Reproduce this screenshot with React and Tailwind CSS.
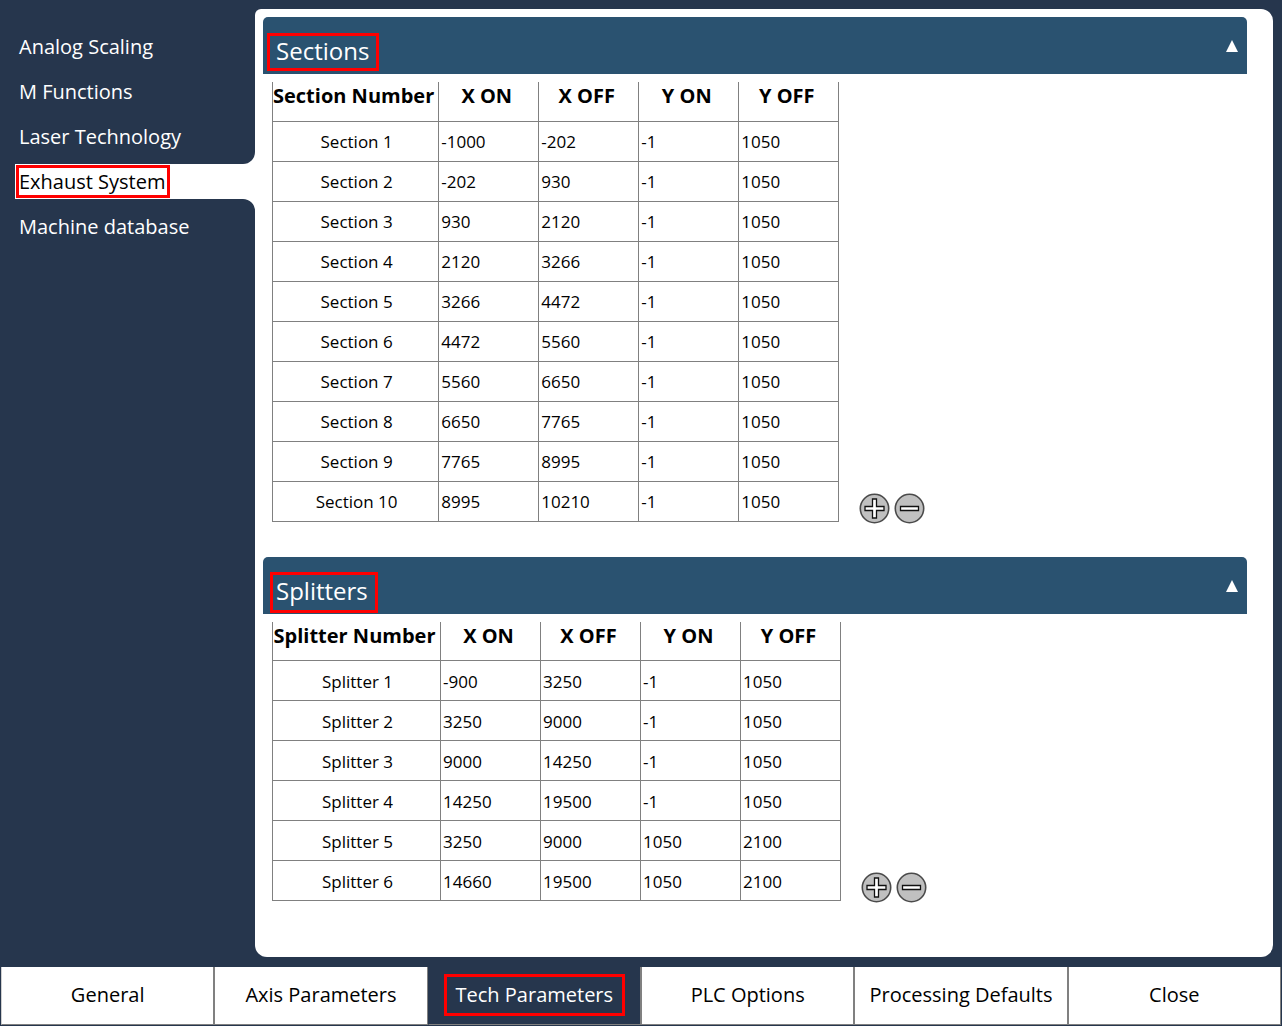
import React from "react";

const menuItems = ["Analog Scaling", "M Functions", "Laser Technology", "Exhaust System", "Machine database"];

const tabs = ["General", "Axis Parameters", "Tech Parameters", "PLC Options", "Processing Defaults", "Close"];

const sections = [
  ["Section 1", "-1000", "-202", "-1", "1050"],
  ["Section 2", "-202", "930", "-1", "1050"],
  ["Section 3", "930", "2120", "-1", "1050"],
  ["Section 4", "2120", "3266", "-1", "1050"],
  ["Section 5", "3266", "4472", "-1", "1050"],
  ["Section 6", "4472", "5560", "-1", "1050"],
  ["Section 7", "5560", "6650", "-1", "1050"],
  ["Section 8", "6650", "7765", "-1", "1050"],
  ["Section 9", "7765", "8995", "-1", "1050"],
  ["Section 10", "8995", "10210", "-1", "1050"],
];

const splitters = [
  ["Splitter 1", "-900", "3250", "-1", "1050"],
  ["Splitter 2", "3250", "9000", "-1", "1050"],
  ["Splitter 3", "9000", "14250", "-1", "1050"],
  ["Splitter 4", "14250", "19500", "-1", "1050"],
  ["Splitter 5", "3250", "9000", "1050", "2100"],
  ["Splitter 6", "14660", "19500", "1050", "2100"],
];

function RoundButton({ label, path }) {
  return (
    <button type="button" aria-label={label} className="size-[31px]">
      <svg viewBox="0 0 31 31" className="size-full">
        <circle cx="15.5" cy="15.5" r="14.2" fill="#c0c0c0" stroke="#4a4a4a" strokeWidth="1.6" />
        <path d={path} fill="#fff" stroke="#111" strokeWidth="1.3" />
      </svg>
    </button>
  );
}

function SidebarItem({ label, active }) {
  if (!active) {
    return (
      <a href="#" className="flex h-[35px] items-center pl-1 text-white">
        {label}
      </a>
    );
  }
  return (
    <a
      href="#"
      aria-current="page"
      className="relative flex h-[35px] items-center bg-white pl-px text-black before:absolute before:right-0 before:bottom-full before:size-3 before:rounded-br-xl before:shadow-[4px_4px_0_4px_white] before:content-[''] before:[clip-path:inset(0)] after:absolute after:top-full after:right-0 after:size-3 after:rounded-tr-xl after:shadow-[4px_-4px_0_4px_white] after:content-[''] after:[clip-path:inset(0)]"
    >
      <span className="flex h-[33px] items-center border-3 border-[#ff0000] pr-0.5">{label}</span>
    </a>
  );
}

function Group({ title, titleClass, firstColumn, firstWidth, rows }) {
  return (
    <section>
      <h2>
        <button
          type="button"
          aria-expanded="true"
          className="flex h-[57px] w-full items-start justify-between rounded-t-[5px] bg-[#2a5270] pr-[9px] text-left text-2xl text-white"
        >
          <span className={titleClass}>{title}</span>
          <svg viewBox="0 0 12 12" className="mt-[23px] size-3" fill="#fff">
            <path d="M6 0L12 12H0Z" />
          </svg>
        </button>
      </h2>
      <div className="mt-2 ml-[9px] flex items-end gap-5">
        <table className="table-fixed border-collapse text-[17px]">
          <colgroup>
            <col className={firstWidth} />
            <col className="w-[100px]" />
            <col className="w-[100px]" />
            <col className="w-[100px]" />
            <col className="w-[100px]" />
          </colgroup>
          <thead>
            <tr className="h-[39px] align-top text-xl font-bold whitespace-nowrap">
              {[firstColumn, "X ON", "X OFF", "Y ON", "Y OFF"].map((name) => (
                <th key={name} scope="col" className="border-x border-b border-[#808080] py-0 pr-1 pl-0">
                  {name}
                </th>
              ))}
            </tr>
          </thead>
          <tbody>
            {rows.map(([name, ...values]) => (
              <tr key={name} className="h-10">
                <th scope="row" className="border border-[#808080] pt-0.5 pr-0 pb-0 pl-0.5 text-center font-normal">
                  {name}
                </th>
                {values.map((value, i) => (
                  <td key={i} className="border border-[#808080] pt-0.5 pr-0 pb-0 pl-0.5">
                    {value}
                  </td>
                ))}
              </tr>
            ))}
          </tbody>
        </table>
        <div className="-mb-0.5 flex gap-1">
          <RoundButton label={`Add to ${title}`} path="M13.5 6H17.5V13.5H25V17.5H17.5V25H13.5V17.5H6V13.5H13.5Z" />
          <RoundButton label={`Remove from ${title}`} path="M6.5 13.5H24.5V17.5H6.5Z" />
        </div>
      </div>
    </section>
  );
}

export default function App() {
  return (
    <div className="flex min-h-screen flex-col bg-[#26364d] font-['Open_Sans','Noto_Sans',sans-serif] text-black">
      <div className="flex flex-1 pt-[9px] pr-[9px] pb-[10px]">
        <nav aria-label="Parameter groups" className="flex w-[255px] shrink-0 flex-col gap-2.5 pt-5 pl-[15px] text-xl">
          {menuItems.map((item) => (
            <SidebarItem key={item} label={item} active={item === "Exhaust System"} />
          ))}
        </nav>
        <main className="flex min-w-0 flex-1 flex-col gap-[35px] rounded-xl rounded-tl-md bg-white pt-2 pr-[26px] pb-8 pl-2">
          <Group
            title="Sections"
            titleClass="mt-4 ml-1 flex h-[38px] items-center border-3 border-[#ff0000] pr-[7px] pb-0.5 pl-1.5"
            firstColumn="Section Number"
            firstWidth="w-[166px]"
            rows={sections}
          />
          <Group
            title="Splitters"
            titleClass="mt-[15px] ml-[7px] flex h-[41px] items-center border-3 border-[#ff0000] pr-[7px] pb-0.5 pl-[3px]"
            firstColumn="Splitter Number"
            firstWidth="w-[168px]"
            rows={splitters}
          />
        </main>
      </div>
      <div role="tablist" className="mb-px grid h-[58px] grid-cols-6 px-px text-xl">
        {tabs.map((tab) => {
          const active = tab === "Tech Parameters";
          return (
            <button
              key={tab}
              type="button"
              role="tab"
              aria-selected={active}
              className={
                active
                  ? "flex items-center justify-center border-x border-b border-[#808080] border-l-[#26364d] pb-0.5 text-white"
                  : "flex items-center justify-center border-x border-b border-[#808080] bg-white pb-0.5 first:border-l-[#d0d0d0]"
              }
            >
              {active ? (
                <span className="flex h-[42px] items-center border-3 border-[#ff0000] px-[9px]">{tab}</span>
              ) : (
                tab
              )}
            </button>
          );
        })}
      </div>
    </div>
  );
}
